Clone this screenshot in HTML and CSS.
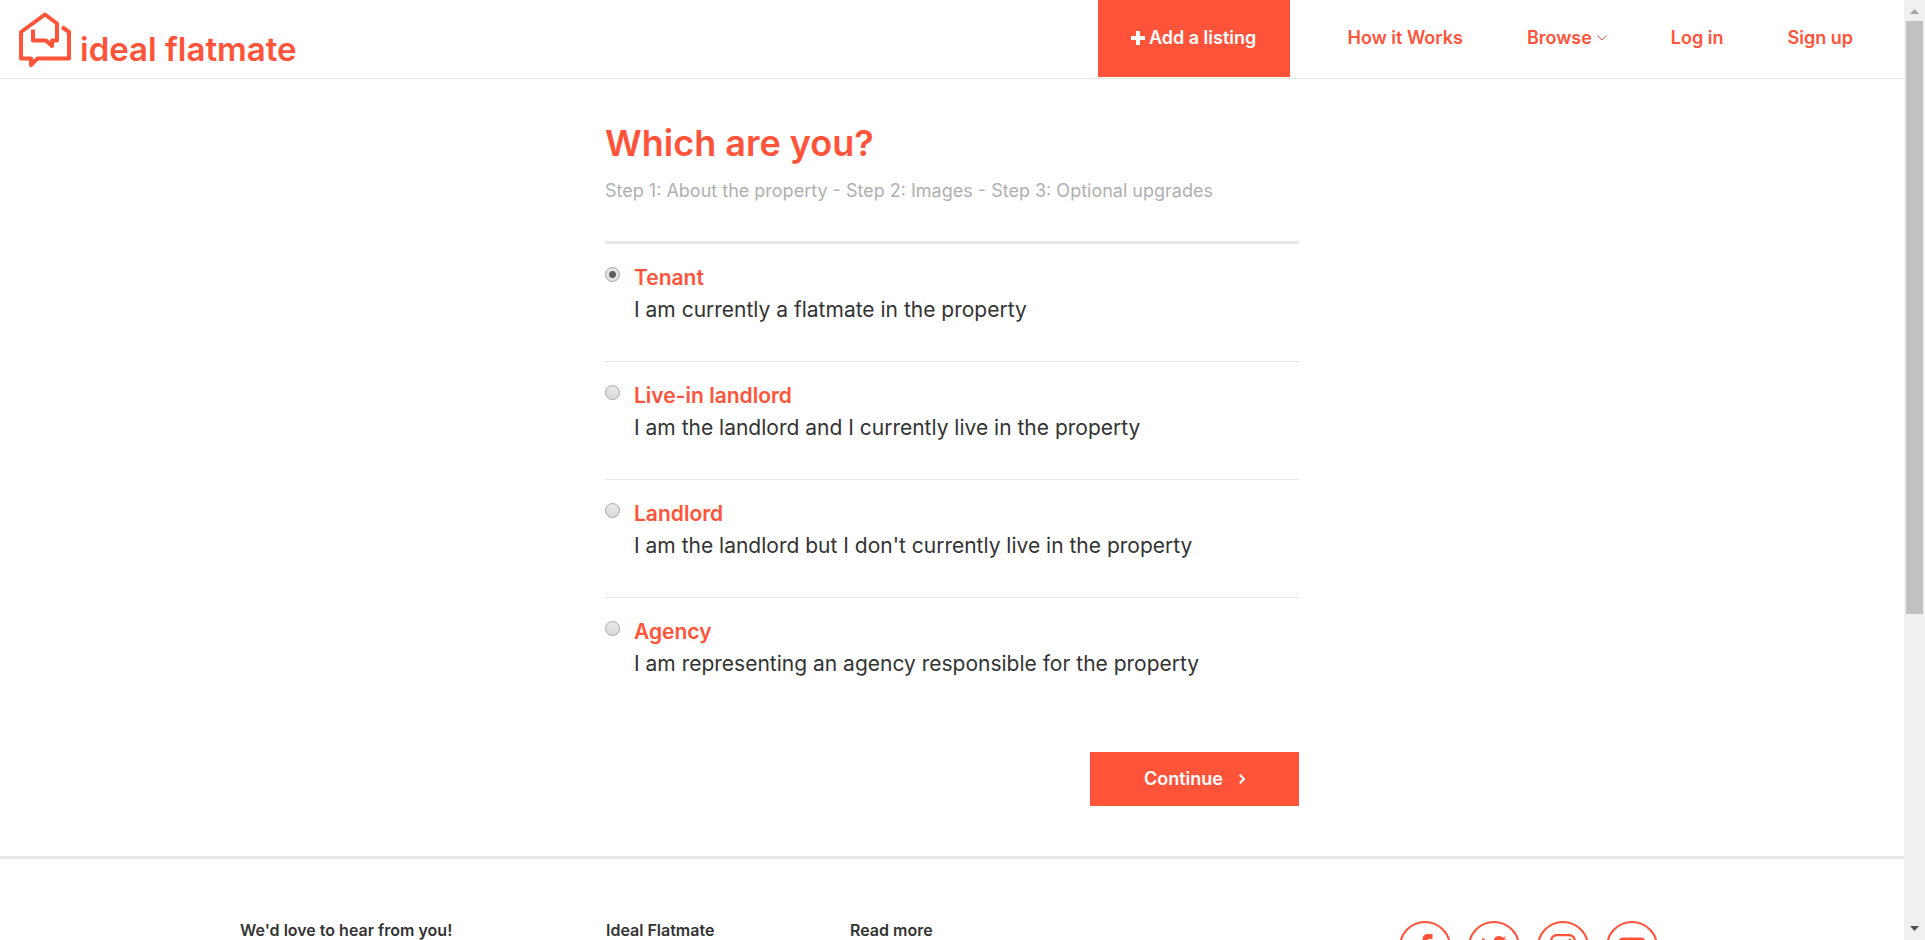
FILE: index.html
```html
<!DOCTYPE html>
<html lang="en">
<head>
<meta charset="utf-8">
<title>Which are you? - ideal flatmate</title>
<link rel="stylesheet" href="styles.css">
</head>
<body>
<div class="page">
  <header class="header">
    <a class="logo" href="#">
      <svg class="logo-mark" viewBox="0 0 54 58" aria-hidden="true">
        <path d="M44 17l7 5v26.500H19.500L13 55v-6.500H3V22L27 4.500l12 9V30.500H34V36l-6-5.500H15V19.500"/>
      </svg>
      <span>ideal flatmate</span>
    </a>
    <nav class="nav">
      <a class="nav-cta" href="#">
        <svg class="plus" viewBox="0 0 14 14" aria-hidden="true"><path d="M5 0h4v5h5v4H9v5H5V9H0V5h5z"/></svg>
        <span>Add a listing</span>
      </a>
      <a class="nav-link" href="#">How it Works</a>
      <a class="nav-link" href="#">Browse <svg class="chevron" viewBox="0 0 10 6" aria-hidden="true"><path d="M.5.500L5 5 9.500.500"/></svg></a>
      <a class="nav-link" href="#">Log in</a>
      <a class="nav-link" href="#">Sign up</a>
    </nav>
  </header>

  <main class="main">
    <h1 class="title">Which are you?</h1>
    <p class="steps">Step 1: About the property - Step 2: Images - Step 3: Optional upgrades</p>
    <form class="form">
      <label class="option">
        <input class="radio" type="radio" name="role" checked>
        <span class="option-text"><strong class="option-name">Tenant</strong><span>I am currently a flatmate in the property</span></span>
      </label>
      <label class="option">
        <input class="radio" type="radio" name="role">
        <span class="option-text"><strong class="option-name">Live-in landlord</strong><span>I am the landlord and I currently live in the property</span></span>
      </label>
      <label class="option">
        <input class="radio" type="radio" name="role">
        <span class="option-text"><strong class="option-name">Landlord</strong><span>I am the landlord but I don't currently live in the property</span></span>
      </label>
      <label class="option">
        <input class="radio" type="radio" name="role">
        <span class="option-text"><strong class="option-name">Agency</strong><span>I am representing an agency responsible for the property</span></span>
      </label>
      <button class="continue" type="button">
        <span>Continue</span>
        <svg class="arrow" viewBox="0 0 6 10" aria-hidden="true"><path d="M.8.800L5 5 .8 9.200"/></svg>
      </button>
    </form>
  </main>

  <footer class="footer">
    <div class="footer-grid">
      <h2 class="footer-title">We'd love to hear from you!</h2>
      <h2 class="footer-title">Ideal Flatmate</h2>
      <div class="footer-last">
        <h2 class="footer-title-plain">Read more</h2>
        <div class="social">
          <a class="social-link" href="#" aria-label="Facebook"><svg viewBox="0 0 28 28" aria-hidden="true"><path d="M21.500 1v5H18c-1.300 0-1.800.700-1.800 2v3h5.200l-.6 4.500h-4.600V27h-4.700V15.500H8V11h3.500V7c0-4 2.200-6 5.500-6z"/></svg></a>
          <a class="social-link" href="#" aria-label="Twitter"><svg viewBox="0 0 28 28" aria-hidden="true"><path d="M27 6.500l-2.600 2.600c.3 8.500-6 15.900-14.900 15.900-3.200 0-6-.9-8.500-2.500 3 .3 5.700-.5 7.900-2.200-2.500-.1-4.400-1.600-5.100-3.800h2.400C3.500 15.700 1.900 13.600 1.900 11l2.400.7C2 10 1.300 7 2.700 4.500c2.800 3.300 6.500 5.300 11 5.500C12.800 6 15.500 3 18.900 3c1.500 0 2.900.600 3.900 1.600l3.400-1.300-2.300 3z"/></svg></a>
          <a class="social-link" href="#" aria-label="Instagram"><svg viewBox="0 0 28 28" aria-hidden="true"><path fill-rule="evenodd" d="M8 1h12c4 0 7 3 7 7v12c0 4-3 7-7 7H8c-4 0-7-3-7-7V8c0-4 3-7 7-7zm0 2.300C5.200 3.300 3.300 5.200 3.300 8v12c0 2.800 1.900 4.700 4.700 4.700h12c2.800 0 4.700-1.900 4.700-4.700V8c0-2.800-1.900-4.700-4.700-4.700zM14 7.300a6.700 6.700 0 1 1 0 13.400 6.700 6.700 0 0 1 0-13.400zm0 2.400a4.300 4.300 0 1 0 0 8.600 4.300 4.300 0 0 0 0-8.600zM21 5.400a1.600 1.600 0 1 1 0 3.200 1.600 1.600 0 0 1 0-3.200z"/></svg></a>
          <a class="social-link" href="#" aria-label="YouTube"><svg viewBox="0 0 28 28" aria-hidden="true"><path fill-rule="evenodd" d="M5 4.500h18c3 0 4 1.500 4 4V20c0 2.500-1 4-4 4H5c-3 0-4-1.500-4-4V8.500c0-2.500 1-4 4-4zm6.500 5.500v9l7.500-4.500z"/></svg></a>
        </div>
      </div>
    </div>
  </footer>
</div>
<div class="scrollbar" aria-hidden="true">
  <svg class="scroll-arrow" viewBox="0 0 9 5"><path fill="#a3a3a3" d="M4.500 0L9 5H0z"/></svg>
  <div class="track"><div class="thumb"></div></div>
  <svg class="scroll-arrow" viewBox="0 0 9 5"><path fill="#505050" d="M0 0h9L4.500 5z"/></svg>
</div>
</body>
</html>
```
FILE: styles.css
```css
* { box-sizing: border-box; }

body {
  margin: 0;
  height: 100vh;
  overflow: hidden;
  display: grid;
  grid-template-columns: 1fr 21px;
  font-family: Inter, "Open Sans", sans-serif;
  font-size: 21px;
  line-height: 32px;
  color: #333;
  background: #fff;
}

a { color: #ff533a; text-decoration: none; }

.page { height: 100vh; overflow: hidden; }

.header {
  display: flex;
  justify-content: space-between;
  height: 79px;
  padding: 0 19px 0 18px;
  border-bottom: 1px solid #e6e6e6;
}

.logo {
  display: flex;
  align-items: center;
  gap: 8px;
  font-size: 33px;
  font-weight: 600;
}
.logo span { padding-top: 20px; }
.logo-mark {
  width: 54px;
  height: 58px;
  fill: none;
  stroke: #ff533a;
  stroke-width: 4;
  stroke-linejoin: round;
}

.nav {
  display: flex;
  font-size: 18px;
  font-weight: 600;
}
.nav-cta {
  display: flex;
  align-items: center;
  justify-content: center;
  gap: 4px;
  width: 192px;
  height: 77px;
  margin-right: 26px;
  padding-bottom: 2px;
  color: #fff;
  background: #ff533a;
}
.plus { width: 14px; height: 14px; fill: #fff; }
.nav-link {
  display: flex;
  align-items: center;
  gap: 5px;
  height: 77px;
  padding: 0 32px 2px;
}
.chevron { width: 10px; height: 6px; fill: none; stroke: #ff533a; stroke-width: 1; }

.main {
  max-width: 694px;
  margin: 0 auto;
  padding: 40px 0 50px;
}
.title {
  margin: 0;
  font-size: 36px;
  line-height: 48px;
  font-weight: 600;
  color: #ff533a;
}
.steps {
  margin: 0;
  padding: 8px 0 34px;
  font-size: 18px;
  font-weight: 400;
  color: #b0b0b0;
}
.form {
  display: flex;
  flex-direction: column;
  border-top: 3px solid #e8e8e8;
}
.option {
  display: flex;
  align-items: flex-start;
  gap: 14px;
  padding: 18px 0 35px;
  font-weight: 400;
}
.option + .option { border-top: 1px solid #e6e6e6; }
.option-text { display: flex; flex-direction: column; }
.option-name { font-weight: 600; color: #ff533a; }
.radio {
  appearance: none;
  width: 15px;
  height: 15px;
  margin: 5px 0 0;
  border: 1px solid #a6a6a6;
  border-radius: 50%;
  background: linear-gradient(#e9e9e9, #d9d9d9);
}
.radio:checked {
  background: radial-gradient(circle, #606060 3px, #e4e4e4 4px);
}
.continue {
  display: flex;
  align-items: center;
  justify-content: center;
  align-self: flex-end;
  gap: 16px;
  width: 209px;
  height: 54px;
  margin-top: 37px;
  border: 0;
  font: inherit;
  font-size: 18px;
  font-weight: 600;
  color: #fff;
  background: #ff533a;
}
.arrow { width: 6px; height: 10px; fill: none; stroke: #fff; stroke-width: 2; }

.footer {
  padding-top: 62px;
  border-top: 3px solid #e8e8e8;
}
.footer-grid {
  display: grid;
  grid-template-columns: 3fr 2fr 7fr;
  max-width: 1464px;
  margin: 0 auto;
}
.footer-title, .footer-title-plain {
  margin: 0;
  font-size: 16px;
  line-height: 18px;
  font-weight: 600;
}
.footer-title { padding-left: 20px; }
.footer-last {
  display: flex;
  justify-content: space-between;
  padding: 0 26px 0 20px;
}
.social { display: flex; gap: 17px; }
.social-link {
  display: flex;
  align-items: center;
  justify-content: center;
  width: 52px;
  height: 52px;
  border: 2px solid #ff533a;
  border-radius: 50%;
}
.social-link svg { width: 28px; height: 28px; fill: #ff533a; }

.scrollbar {
  display: flex;
  flex-direction: column;
  align-items: center;
  height: 100vh;
  padding: 9px 2px;
  background: #f0f0f0;
}
.scroll-arrow { width: 9px; height: 5px; }
.track { flex: 1; width: 100%; padding: 7px 0; }
.thumb { height: 66%; background: #c1c1c1; }
```
